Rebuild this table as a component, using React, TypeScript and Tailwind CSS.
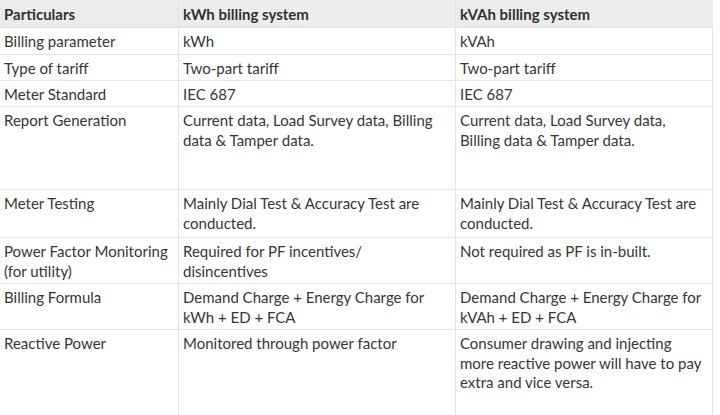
import React from "react";

const rows: [string, string, string][] = [
  ["Billing parameter", "kWh", "kVAh"],
  ["Type of tariff", "Two-part tariff", "Two-part tariff"],
  ["Meter Standard", "IEC 687", "IEC 687"],
  [
    "Report Generation",
    "Current data, Load Survey data, Billing data & Tamper data.",
    "Current data, Load Survey data, Billing data & Tamper data.",
  ],
  [
    "Meter Testing",
    "Mainly Dial Test & Accuracy Test are conducted.",
    "Mainly Dial Test & Accuracy Test are conducted.",
  ],
  [
    "Power Factor Monitoring (for utility)",
    "Required for PF incentives/ disincentives",
    "Not required as PF is in-built.",
  ],
  [
    "Billing Formula",
    "Demand Charge + Energy Charge for kWh + ED + FCA",
    "Demand Charge + Energy Charge for kVAh + ED + FCA",
  ],
  [
    "Reactive Power",
    "Monitored through power factor",
    "Consumer drawing and injecting more reactive power will have to pay extra and vice versa.",
  ],
];

export default function App() {
  return (
    <div
      className="w-[720px] h-[415px] overflow-hidden bg-white text-[#363636] text-[15px] leading-[19.5px]"
      style={{ fontFamily: "Lato, 'Open Sans', sans-serif" }}
    >
      <div className="grid w-[713px] grid-cols-[178px_277px_258px] grid-rows-[28px_27px_26px_26px_83px_48px_46px_46px_85px] border-r border-[#e4e4e4]">
        {["Particulars", "kWh billing system", "kVAh billing system"].map((h, i) => (
          <div
            key={h}
            className={`bg-[#ececec] font-bold text-[#303030] pl-[4px] pt-[5px] border-b border-[#dedede] ${i > 0 ? "border-l border-[#e4e4e4]" : ""}`}
          >
            {h}
          </div>
        ))}
        {rows.map((r, ri) =>
          r.map((c, ci) => (
            <div
              key={ri + "-" + ci}
              className={`pt-[4px] ${ci === 0 ? "pl-[4px] pr-[2px]" : "pl-[4px] pr-[6px] border-l border-[#e4e4e4]"} ${ri < rows.length - 1 ? "border-b border-[#e4e4e4]" : ""}`}
            >
              {c}
            </div>
          ))
        )}
      </div>
    </div>
  );
}
